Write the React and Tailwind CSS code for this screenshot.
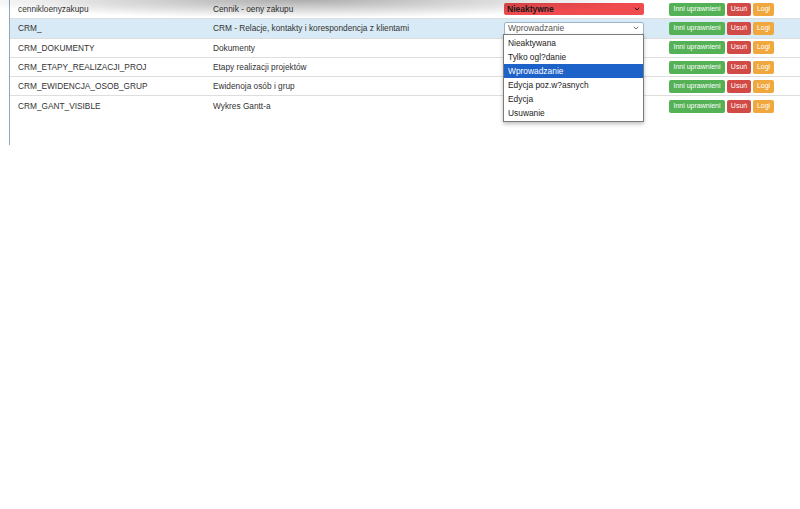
import { ChevronDown } from "lucide-react";

const rows = [
  { code: "cennikloenyzakupu", name: "Cennik - oeny zakupu", level: "Nieaktywne" },
  { code: "CRM_", name: "CRM - Relacje, kontakty i korespondencja z klientami", level: "Wprowadzanie", active: true },
  { code: "CRM_DOKUMENTY", name: "Dokumenty" },
  { code: "CRM_ETAPY_REALIZACJI_PROJ", name: "Etapy realizacji projektów" },
  { code: "CRM_EWIDENCJA_OSOB_GRUP", name: "Ewidenoja osób i grup" },
  { code: "CRM_GANT_VISIBLE", name: "Wykres Gantt-a" },
];

const options = ["Nieaktywana", "Tylko ogl?danie", "Wprowadzanie", "Edycja poz.w?asnych", "Edycja", "Usuwanie"];

function LevelSelect({ row }) {
  if (!row.level) return null;
  if (row.level === "Nieaktywne") {
    return (
      <div className="w-[140px] h-[12px] rounded-[2px] bg-[#f04b4f] flex items-center justify-between px-[3px] text-[8.5px] font-bold text-[#1a1a1a]">
        <span>Nieaktywne</span>
        <ChevronDown size={8} strokeWidth={3} />
      </div>
    );
  }
  return (
    <div className="w-[140px] h-[13px] rounded-[2px] bg-white border border-[#9fb3c4] flex items-center justify-between px-[3px] text-[8.5px] text-[#555]">
      <span>{row.level}</span>
      <ChevronDown size={8} strokeWidth={2.5} />
    </div>
  );
}

export default function App() {
  return (
    <div className="relative w-[800px] h-[509px] bg-white overflow-hidden font-['Liberation_Sans',Arial,sans-serif] text-[#333]">
      <div className="ml-[9px] border-l border-[#8ea7ba] pb-[29px]">
        {rows.map((r, i) => (
          <div
            key={i}
            className={`grid grid-cols-[195px_291px_165px_1fr] items-center h-[19.3px] pl-[8px] text-[8.3px] ${
              i < rows.length - 1 ? "border-b border-[#dedede]" : ""
            } ${r.active ? "bg-[#d8eaf5]" : "bg-white"}`}
          >
            <div>{r.code}</div>
            <div>{r.name}</div>
            <div>
              <LevelSelect row={r} />
            </div>
            <div className="flex gap-[2px] text-[7px] text-white">
              <span className="h-[13px] w-[56px] rounded-[2px] bg-[#55b155] flex items-center justify-center">Inni uprawnieni</span>
              <span className="h-[13px] w-[24px] rounded-[2px] bg-[#d24a45] flex items-center justify-center">Usuń</span>
              <span className="h-[13px] w-[21px] rounded-[2px] bg-[#f0a73e] flex items-center justify-center">Logi</span>
            </div>
          </div>
        ))}
      </div>

      {/* open dropdown list */}
      <div className="absolute left-[503px] top-[34px] w-[141px] bg-white border border-[#7a7a7a] shadow-[0_2px_4px_rgba(0,0,0,0.25)] py-[1px] text-[8.4px] font-normal text-[#222]">
        {options.map((o) => (
          <div
            key={o}
            className={`h-[14px] flex items-center px-[4px] ${o === "Wprowadzanie" ? "bg-[#1d62c9] text-white" : ""}`}
          >
            {o}
          </div>
        ))}
      </div>

      {/* shadow from the header above */}
      <div className="absolute left-0 top-0 w-full h-[22px] pointer-events-none bg-[radial-gradient(ellipse_340px_18px_at_300px_0,rgba(0,0,0,0.32),transparent)]" />
    </div>
  );
}
